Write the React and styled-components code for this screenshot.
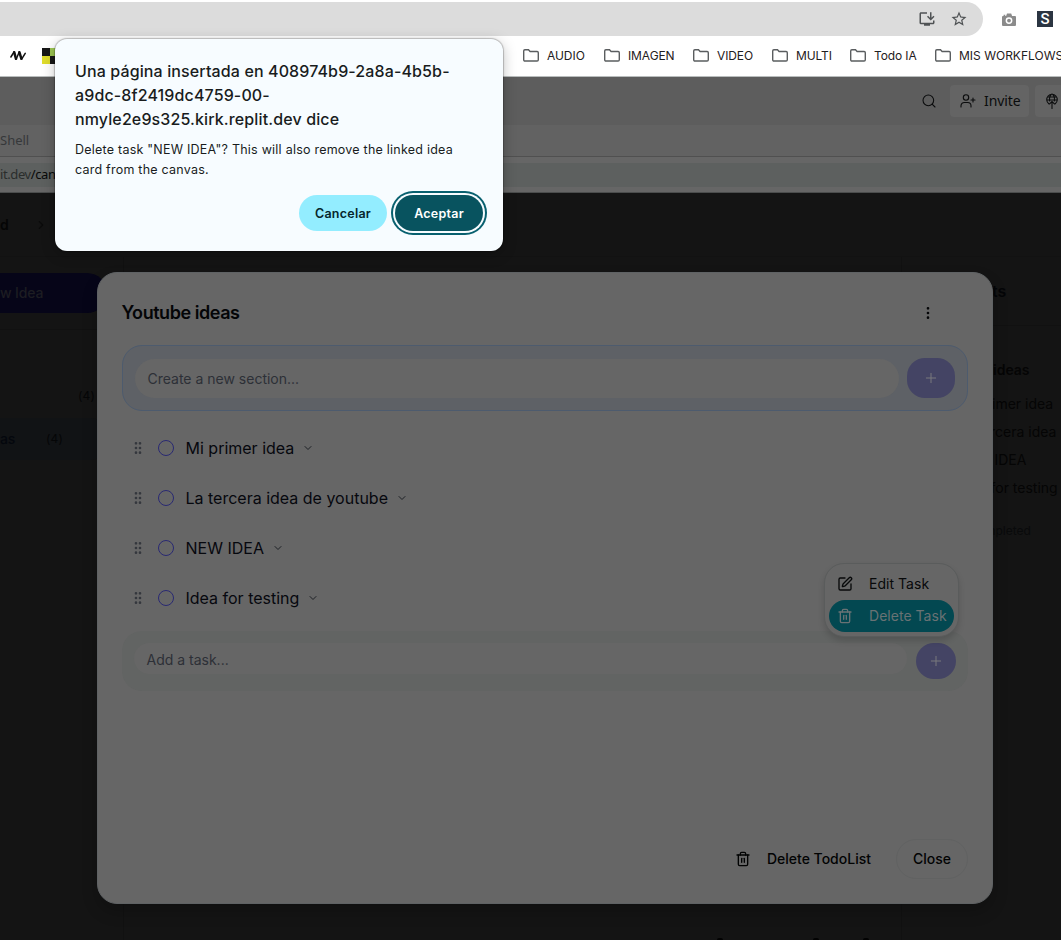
import React from "react";
import styled, { createGlobalStyle } from "styled-components";
import {
  ChevronDown,
  ChevronRight,
  EllipsisVertical,
  GripVertical,
  Plus,
  Search,
  SquarePen,
  Trash2,
} from "lucide-react";
import { MdOutlineInstallDesktop, MdStarBorder } from "react-icons/md";

const GlobalStyle = createGlobalStyle`
  *, *::before, *::after { box-sizing: border-box; }
  body { margin: 0; overflow: hidden; background: #141414; }
  button, input { font: inherit; letter-spacing: inherit; margin: 0; border: 0; }
  svg { flex: none; display: block; }
`;

const Window = styled.div`
  position: relative;
  width: 1061px;
  height: 940px;
  overflow: hidden;
  display: flex;
  flex-direction: column;
  background: #141414;
  font-family: Inter, "Liberation Sans", sans-serif;
  font-size: 14px;
  color: #040507;
  white-space: nowrap;
`;

/* Browser toolbar */
const Toolbar = styled.div`
  flex: none;
  display: flex;
  height: 36px;
  padding-top: 2px;
  background: #fff;
`;
const Omnibox = styled.div`
  width: 983px;
  height: 34px;
  display: flex;
  align-items: center;
  justify-content: flex-end;
  gap: 14px;
  padding-right: 15px;
  border-radius: 0 17px 17px 0;
  background: #dcdcdc;
  color: #4f5254;
`;
const Extensions = styled.div`
  display: flex;
  align-items: center;
  gap: 21px;
  padding-left: 19px;
`;
const ExtensionS = styled.span`
  width: 16px;
  height: 16px;
  background: #2b3542;
  color: #fff;
  font: 500 15px/16px Roboto, sans-serif;
  text-align: center;
`;
const Bookmarks = styled.div`
  flex: none;
  display: flex;
  align-items: center;
  height: 41px;
  padding: 0 0 1px 10px;
  background: #fff;
  border-bottom: 1px solid #b9bdbd;
  color: #1f2021;
`;
const Pixels = styled.span`
  display: grid;
  grid-template-columns: 8px 8px;
  grid-template-rows: 8px 8px;
  margin: 0 465px 0 16px;
  i:nth-child(1), i:nth-child(4) { background: #171717; }
  i:nth-child(2) { background: #9cc552; }
  i:nth-child(3) { background: #dfdc2b; }
`;
const Bookmark = styled.span`
  display: flex;
  align-items: center;
  flex: none;
  width: ${(p) => p.$w}px;
  gap: 8px;
  font-size: 12px;
  line-height: 16px;
  letter-spacing: ${(p) => p.$ls || 0}px;
`;

/* Workspace bars */
const WorkspaceHeader = styled.div`
  flex: none;
  display: flex;
  align-items: center;
  justify-content: flex-end;
  height: 48px;
  background: #5d5d5d;
  color: #0b0c0d;
  font-family: "Noto Sans", sans-serif;
`;
const HeaderButton = styled.span`
  display: flex;
  align-items: center;
  gap: 8px;
  width: ${(p) => p.$w}px;
  height: 32px;
  padding-left: ${(p) => p.$pad}px;
  margin-left: ${(p) => p.$ml}px;
  border-radius: ${(p) => (p.$cut ? "4px 0 0 4px" : "4px")};
  background: #646464;
  letter-spacing: -0.1px;
  line-height: 18px;
`;
const TabBar = styled.div`
  flex: none;
  display: flex;
  align-items: center;
  height: 32px;
  padding-bottom: 1px;
  background: #626262;
  border-bottom: 1px solid #505050;
  color: #36383a;
  font: 13px "Noto Sans", sans-serif;
`;
const AddressBar = styled.div`
  flex: none;
  height: 36px;
  padding: 6px 0 5px;
  background: #666;
  border-bottom: 1px solid #4b4d4d;
`;
const Address = styled.div`
  height: 24px;
  background: #5d605f;
  color: #2a2d2c;
  font: 13px/23px "Noto Sans", sans-serif;
  letter-spacing: -0.4px;
  b { font-weight: 400; color: #080909; }
`;

/* Application behind the overlay */
const Breadcrumb = styled.div`
  flex: none;
  display: flex;
  align-items: center;
  gap: 25px;
  height: 64px;
  border-bottom: 1px solid #121212;
  font-weight: 600;
  color: #050505;
`;
const Columns = styled.div`
  flex: 1;
  display: grid;
  grid-template-columns: 124px 777px 160px;
`;
const LeftColumn = styled.div`
  display: flex;
  flex-direction: column;
  border-right: 1px solid #111;
`;
const NewIdeaArea = styled.div`
  flex: none;
  height: 73px;
  padding-top: 16px;
  border-bottom: 1px solid #111;
`;
const NewIdea = styled.div`
  width: 107px;
  height: 40px;
  border-radius: 0 20px 20px 0;
  background: #060518;
  color: #1d1d22;
  font-weight: 500;
  line-height: 40px;
  letter-spacing: -0.15px;
`;
const ListLink = styled.div`
  flex: none;
  display: flex;
  align-items: center;
  height: 42px;
  margin-top: ${(p) => p.$mt}px;
  width: 107px;
  gap: 31px;
  border-radius: 0 16px 16px 0;
  background: ${(p) => (p.$active ? "#111315" : "transparent")};
  padding: 0 0 2px ${(p) => p.$pl || 0}px;
  font-weight: 500;
  letter-spacing: -0.3px;
  color: #04070d;
  small { font-size: 12px; font-weight: 400; letter-spacing: 0.2px; color: #050607; }
`;
const Board = styled.div`
  display: flex;
  align-items: flex-end;
  padding-left: 593px;
`;
const CardTop = styled.span`
  width: 6px;
  height: 2px;
  margin-right: ${(p) => p.$mr}px;
  border-radius: 3px 3px 0 0;
  background: #020202;
`;
const RightColumn = styled.div`
  display: flex;
  flex-direction: column;
  border-left: 1px solid #111;
`;
const PanelHeading = styled.div`
  flex: none;
  height: 69px;
  padding-left: 90px;
  border-bottom: 1px solid #111;
  font-size: 16px;
  font-weight: 600;
  line-height: 69px;
`;
const PanelRow = styled.div`
  flex: none;
  height: 28px;
  line-height: 28px;
  margin-top: ${(p) => p.$mt || 0}px;
  padding-left: ${(p) => p.$pl}px;
  font-weight: ${(p) => (p.$bold ? 600 : 400)};
  font-size: ${(p) => (p.$small ? 12 : 14)}px;
  color: ${(p) => (p.$small ? "#090a0b" : "#050505")};
`;

/* Todo list modal */
const Modal = styled.section`
  position: absolute;
  left: 97px;
  top: 272px;
  width: 896px;
  height: 632px;
  display: flex;
  flex-direction: column;
  padding: 24px;
  border: 1px solid #5f6264;
  border-radius: 20px;
  background: #666;
  box-shadow: 0 8px 16px rgba(0, 0, 0, 0.2);
`;
const ModalHeader = styled.header`
  flex: none;
  display: flex;
  align-items: center;
  justify-content: space-between;
  height: 32px;
  padding-right: 32px;
`;
const ModalTitle = styled.h2`
  margin: 0 0 2px -0.5px;
  font-size: 18px;
  font-weight: 600;
  letter-spacing: -0.45px;
`;
const AddForm = styled.div`
  flex: none;
  display: flex;
  align-items: ${(p) => (p.$section ? "center" : "flex-start")};
  justify-content: space-between;
  height: ${(p) => (p.$section ? 66 : 60)}px;
  margin-top: ${(p) => (p.$section ? 16 : 8)}px;
  padding: ${(p) => (p.$section ? "0 12px" : "12px 12px 0")};
  border-radius: 20px;
  border: ${(p) => (p.$section ? "1px solid #4d5b6e" : "0")};
  background: ${(p) => (p.$section ? "#5e6166" : "#626463")};
`;
const Field = styled.div`
  width: ${(p) => p.$w}px;
  height: ${(p) => p.$h}px;
  line-height: ${(p) => p.$h + (p.$drop || 0)}px;
  padding-left: 12.5px;
  border-radius: 20px;
  background: #666;
  color: #2d3037;
`;
const AddButton = styled.button`
  display: grid;
  place-items: center;
  width: ${(p) => p.$w}px;
  height: ${(p) => p.$h}px;
  padding: 0;
  border-radius: 18px;
  background: #444464;
  color: #78787d;
`;
const Tasks = styled.div`
  display: flex;
  flex-direction: column;
  margin-top: 12px;
`;
const Task = styled.div`
  display: flex;
  align-items: center;
  height: 50px;
  padding-left: 8px;
  font-size: 16px;
  color: #06080e;
  > svg:first-child { color: #34373d; }
  > svg:last-child { color: #1d2025; }
`;
const Check = styled.span`
  width: 16px;
  height: 16px;
  margin: 0 11.5px 0 12px;
  border: 1px solid #292973;
  border-radius: 50%;
`;
const TaskName = styled.span`
  margin-right: 8px;
`;
const ModalFooter = styled.footer`
  display: flex;
  justify-content: flex-end;
  gap: 8px;
  margin-top: auto;
`;
const FooterButton = styled.button`
  display: flex;
  align-items: center;
  gap: 16px;
  height: 40px;
  padding: 0 16px;
  border-radius: 20px;
  border: 1px solid ${(p) => (p.$outlined ? "#616262" : "transparent")};
  background: transparent;
  color: #020303;
  font-weight: 500;
  span { padding-bottom: 2px; }
`;
const Menu = styled.div`
  position: absolute;
  left: 824px;
  top: 563px;
  width: 135px;
  padding: 4px;
  border: 1px solid #5a5c5c;
  border-radius: 20px;
  background: #666;
  box-shadow: 0 4px 6px rgba(0, 0, 0, 0.15);
`;
const MenuItem = styled.div`
  display: flex;
  align-items: center;
  gap: 16px;
  height: 32px;
  padding-left: 8px;
  border-radius: 16px;
  letter-spacing: 0.03px;
  background: ${(p) => (p.$active ? "#034851" : "transparent")};
  color: ${(p) => (p.$active ? "#697274" : "#08090a")};
  span { padding-bottom: 2px; }
`;

/* Browser confirmation */
const Confirm = styled.div`
  position: absolute;
  left: 55px;
  top: 39px;
  width: 448px;
  height: 212px;
  padding: 20px;
  border-radius: 12px;
  background: #f7fcff;
  color: #191c1d;
  box-shadow: 0 0 1px 1px rgba(0, 0, 0, 0.22), 0 3px 14px rgba(0, 0, 0, 0.25);
`;
const ConfirmTitle = styled.div`
  font-size: 16px;
  font-weight: 500;
  line-height: 24px;
  letter-spacing: 0.12px;
`;
const ConfirmText = styled.div`
  margin-top: 9px;
  font-size: 12.5px;
  line-height: 20px;
  letter-spacing: 0.23px;
`;
const ConfirmActions = styled.div`
  display: flex;
  justify-content: flex-end;
  gap: 8px;
  margin-top: 15px;
`;
const ConfirmButton = styled.button`
  width: 88px;
  height: 36px;
  padding: 0;
  border-radius: 18px;
  font-size: 12.5px;
  font-weight: 600;
  letter-spacing: 0.25px;
  background: ${(p) => (p.$primary ? "#08535f" : "#93edff")};
  color: ${(p) => (p.$primary ? "#fff" : "#05262c")};
  box-shadow: ${(p) => (p.$primary ? "0 0 0 2px #f7fcff, 0 0 0 4px #08606f" : "none")};
`;

const FolderIcon = () => (
  <svg width="16" height="13" viewBox="0 0 16 13" fill="none" stroke="#5a5d5f" strokeWidth="1.4">
    <path d="M.7 2A1.2 1.2 0 0 1 1.9.8h3.6l1.6 1.7h7a1.2 1.2 0 0 1 1.2 1.2v7.1a1.2 1.2 0 0 1-1.2 1.2H1.9a1.2 1.2 0 0 1-1.2-1.2Z" />
  </svg>
);
const CameraIcon = () => (
  <svg width="14" height="13" viewBox="0 0 14 13">
    <path fill="#8b8b8b" fillRule="evenodd" d="M1 3h.6V1.7h1.7V3h.8L5 .6h4.2L10.1 3H13a1 1 0 0 1 1 1v8a1 1 0 0 1-1 1H1a1 1 0 0 1-1-1V4a1 1 0 0 1 1-1Zm6 1.2a3.4 3.4 0 1 0 0 6.8 3.4 3.4 0 0 0 0-6.8Z" />
    <circle cx="7" cy="7.6" r="1.9" fill="#8b8b8b" />
  </svg>
);
const ZigzagIcon = () => (
  <svg width="16" height="11" viewBox="0 0 16 11" fill="none" stroke="#111" strokeLinejoin="round" strokeLinecap="round">
    <path strokeWidth="1.5" d="M.9 7 4 2M6.4 8.8 9.2 2M11.8 8.8 15.2 3.4" />
    <path strokeWidth="2.5" d="M4.2 2.2 6 8.8M9.4 2.2 11.4 8.8" />
  </svg>
);
const InviteIcon = () => (
  <svg width="16" height="16" viewBox="0 0 16 16" fill="none" stroke="currentColor" strokeWidth="1.1" strokeLinecap="round">
    <circle cx="6" cy="4.5" r="2.7" />
    <path d="M1 14v-1.2A3.3 3.3 0 0 1 4.3 9.5h3.4a3.3 3.3 0 0 1 3.3 3.3V14M13 5v4M11 7h4" />
  </svg>
);
const PublishIcon = () => (
  <svg width="16" height="16" viewBox="0 0 16 16" fill="none" stroke="currentColor" strokeWidth="1.1" strokeLinecap="round">
    <path d="M4.8 10.8A5.3 5.3 0 1 1 11.2 10.8M5.6 8C5.2 4.6 6.2 2 8 1c1.8 1 2.8 3.6 2.4 7M2.8 7h10.4M3.6 4h8.8M8 15.4V8.5M5.6 10.9 8 8.5l2.4 2.4" />
  </svg>
);

const bookmarks = [
  ["AUDIO", 81, -0.05],
  ["IMAGEN", 89, -0.1],
  ["VIDEO", 79, -0.1],
  ["MULTI", 78, -0.1],
  ["Todo IA", 85, -0.12],
  ["MIS WORKFLOWS", 130, 0],
];
const tasks = ["Mi primer idea", "La tercera idea de youtube", "NEW IDEA", "Idea for testing"];

export default function App() {
  return (
    <>
      <GlobalStyle />
      <Window>
        <Toolbar>
          <Omnibox>
            <MdOutlineInstallDesktop size={18} />
            <MdStarBorder size={18} />
          </Omnibox>
          <Extensions>
            <CameraIcon />
            <ExtensionS>S</ExtensionS>
          </Extensions>
        </Toolbar>
        <Bookmarks>
          <ZigzagIcon />
          <Pixels><i /><i /><i /><i /></Pixels>
          {bookmarks.map(([name, w, ls]) => (
            <Bookmark key={name} $w={w} $ls={ls}>
              <FolderIcon />
              {name}
            </Bookmark>
          ))}
        </Bookmarks>
        <WorkspaceHeader>
          <Search size={16} strokeWidth={1.6} />
          <HeaderButton $w={79} $pad={10} $ml={13}>
            <InviteIcon />
            Invite
          </HeaderButton>
          <HeaderButton $w={26} $pad={9} $ml={6} $cut>
            <PublishIcon />
          </HeaderButton>
        </WorkspaceHeader>
        <TabBar>Shell</TabBar>
        <AddressBar>
          <Address>it.dev<b>/can</b></Address>
        </AddressBar>
        <Breadcrumb>
          d
          <ChevronRight size={14} color="#0b0b0b" />
        </Breadcrumb>
        <Columns>
          <LeftColumn>
            <NewIdeaArea>
              <NewIdea>w Idea</NewIdea>
            </NewIdeaArea>
            <ListLink $mt={45} $pl={78}>
              <small>(4)</small>
            </ListLink>
            <ListLink $mt={1} $active>
              as
              <small>(4)</small>
            </ListLink>
          </LeftColumn>
          <Board>
            <CardTop $mr={90} />
            <CardTop $mr={44} />
            <CardTop $mr={0} />
          </Board>
          <RightColumn>
            <PanelHeading>ts</PanelHeading>
            <PanelRow $mt={30} $pl={91} $bold>ideas</PanelRow>
            <PanelRow $mt={6} $pl={90}>imer idea</PanelRow>
            <PanelRow $pl={88}>rcera idea</PanelRow>
            <PanelRow $pl={92.5}>IDEA</PanelRow>
            <PanelRow $pl={88.5}>for testing</PanelRow>
            <PanelRow $mt={15} $pl={83} $small>mpleted</PanelRow>
          </RightColumn>
        </Columns>

        <Modal>
          <ModalHeader>
            <ModalTitle>Youtube ideas</ModalTitle>
            <EllipsisVertical size={16} />
          </ModalHeader>
          <AddForm $section>
            <Field $w={764} $h={39}>Create a new section...</Field>
            <AddButton $w={48} $h={40}><Plus size={16} strokeWidth={1.5} /></AddButton>
          </AddForm>
          <Tasks>
            {tasks.map((name) => (
              <Task key={name}>
                <GripVertical size={16} />
                <Check />
                <TaskName>{name}</TaskName>
                <ChevronDown size={12} />
              </Task>
            ))}
          </Tasks>
          <AddForm>
            <Field $w={773} $h={31} $drop={2}>Add a task...</Field>
            <AddButton $w={40} $h={36}><Plus size={16} strokeWidth={1.5} /></AddButton>
          </AddForm>
          <ModalFooter>
            <FooterButton>
              <Trash2 size={16} />
              <span>Delete TodoList</span>
            </FooterButton>
            <FooterButton $outlined><span>Close</span></FooterButton>
          </ModalFooter>
        </Modal>

        <Menu>
          <MenuItem>
            <SquarePen size={16} />
            <span>Edit Task</span>
          </MenuItem>
          <MenuItem $active>
            <Trash2 size={16} />
            <span>Delete Task</span>
          </MenuItem>
        </Menu>

        <Confirm>
          <ConfirmTitle>
            Una página insertada en 408974b9-2a8a-4b5b-<br />
            a9dc-8f2419dc4759-00-<br />
            nmyle2e9s325.kirk.replit.dev dice
          </ConfirmTitle>
          <ConfirmText>
            Delete task "NEW IDEA"? This will also remove the linked idea<br />
            card from the canvas.
          </ConfirmText>
          <ConfirmActions>
            <ConfirmButton>Cancelar</ConfirmButton>
            <ConfirmButton $primary>Aceptar</ConfirmButton>
          </ConfirmActions>
        </Confirm>
      </Window>
    </>
  );
}
